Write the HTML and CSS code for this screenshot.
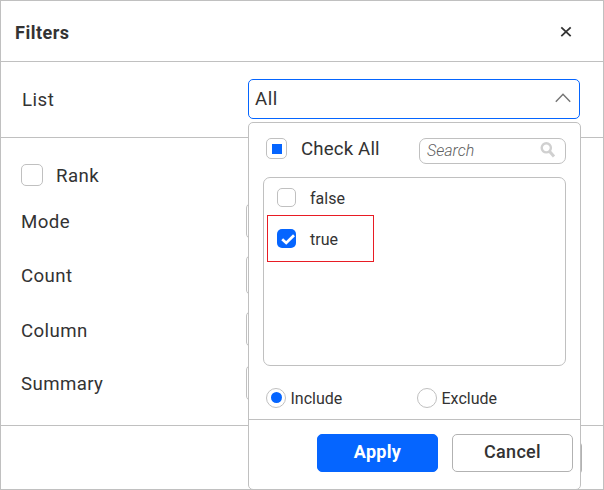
FILE: index.html
```html
<!DOCTYPE html>
<html lang="en">
<head>
<meta charset="utf-8">
<title>Filters</title>
<link rel="stylesheet" href="styles.css">
</head>
<body>
<div class="dialog">
  <header class="header">
    <span class="title">Filters</span>
    <svg class="close" width="12" height="12" viewBox="0 0 12 12"><path d="M1.3 1.3 10.7 10.2M10.7 1.3 1.3 10.2"/></svg>
  </header>
  <section class="list-row">
    <span class="label">List</span>
    <div class="select">
      <span class="select-value">All</span>
      <svg class="chevron" width="16" height="10" viewBox="0 0 16 10"><path d="M.8 8.8 8 1.2 15.2 8.8"/></svg>
      <div class="popup">
        <div class="popup-top">
          <span class="box partial"></span>
          <span class="check-all">Check All</span>
          <div class="search"><span class="search-text">Search</span>
            <svg width="16" height="16" viewBox="0 0 16 16"><circle cx="6.3" cy="5.8" r="4.6"/><path d="M9.2 9.1 14 14.4"/></svg>
          </div>
        </div>
        <div class="options">
          <div class="option"><span class="box small"></span><span class="option-text">false</span></div>
          <div class="option marked"><span class="box small checked"><svg width="19" height="19" viewBox="0 0 19 19"><path d="M5.2 10.3 9.2 14 17 6.2"/></svg></span><span class="option-text">true</span></div>
        </div>
        <div class="modes">
          <div class="mode"><span class="radio on"></span><span class="mode-text">Include</span></div>
          <div class="mode"><span class="radio"></span><span class="mode-text">Exclude</span></div>
        </div>
        <div class="actions"><div class="button primary"><span class="apply-text">Apply</span></div><div class="button"><span class="cancel-text">Cancel</span></div></div>
      </div>
    </div>
  </section>
  <section class="rank">
    <div class="rank-row"><span class="box large"></span><span class="rank-text">Rank</span></div>
    <div class="field"><span class="field-text">Mode</span><span class="input"></span></div>
    <div class="field count"><span class="field-text">Count</span><span class="input tall"></span></div>
    <div class="field column"><span class="field-text">Column</span><span class="input"></span></div>
    <div class="field summary"><span class="field-text">Summary</span><span class="input"></span></div>
  </section>
  <footer class="footer"><span class="footer-button"></span></footer>
</div>
</body>
</html>
```
FILE: styles.css
```css
* { box-sizing: border-box; }
body { margin: 0; background: #fff; color: #333; font: 18.67px/24px Roboto, sans-serif; }
svg { display: block; fill: none; }
.dialog { width: 604px; height: 490px; border: 1px solid #c0c0c0; overflow: hidden; display: flex; flex-direction: column; }
.header { height: 61px; border-bottom: 1px solid #c0c0c0; display: flex; align-items: center; justify-content: space-between; padding: 2px 31px 0 14px; }
.title { font-size: 18px; font-weight: 700; letter-spacing: .5px; padding-top: 1px; }
.close { stroke: #333; stroke-width: 1.8; }
.list-row { height: 76px; border-bottom: 1px solid #c0c0c0; display: flex; align-items: center; padding: 0 23px 0 21px; letter-spacing: .5px; }
.label { flex: 1; }
.select { position: relative; width: 332px; height: 40px; margin-top: -2px; border: 1px solid #0565ff; border-radius: 5px; display: flex; align-items: center; justify-content: space-between; padding: 0 8px 0 6px; background: #fff; }
.chevron { stroke: #757575; stroke-width: 1.4; margin-top: -1px; }
.popup { position: absolute; z-index: 2; top: 42px; left: -1px; width: 333px; height: 368px; border: 1px solid #c0c0c0; border-radius: 5px; background: #fff; letter-spacing: 0; }
.popup-top { height: 54px; display: flex; padding: 15px 14px 0 17px; }
.box { display: block; flex: none; width: 21px; height: 21px; border: 1px solid #c0c0c0; border-radius: 5px; background: #fff; }
.partial { padding: 5px; }
.partial::before { content: ""; display: block; width: 10px; height: 10px; background: #0565ff; margin-left: 0; }
.check-all { margin: -1px auto 0 14px; letter-spacing: .15px; }
.search { width: 147px; height: 26px; border: 1px solid #c0c0c0; border-radius: 7px; display: flex; justify-content: space-between; align-items: center; padding: 0 9px 0 7px; font-size: 16px; font-weight: 300; font-style: italic; color: #606060; }
.search svg { stroke: #d0d0d0; stroke-width: 2.4; margin-top: -2px; }
.search path { stroke-width: 3; }
.options { width: 303px; height: 189px; margin-left: 14px; border: 1px solid #c0c0c0; border-radius: 7px; padding: 1px 3px; font-size: 16px; }
.option { height: 36px; display: flex; align-items: center; padding-left: 10px; }
.option-text { padding-top: 3px; }
.option:first-child .option-text { padding-top: 5px; }
.marked { width: 107px; height: 47px; border: 1px solid #e81c24; padding-left: 9px; }
.small { width: 19px; height: 19px; margin-right: 14px; }
.option:first-child .small { margin-top: 2px; }
.checked { border: 0; background: #0565ff; stroke: #fff; stroke-width: 2.7; }
.modes { display: flex; height: 53px; padding: 22px 0 0 17px; font-size: 16px; }
.mode { display: flex; width: 151px; height: 20px; align-items: center; gap: 4.5px; }
.mode-text { padding-top: 2px; }
.radio { width: 20px; height: 20px; border: 1px solid #c0c0c0; border-radius: 50%; padding: 3px 4px; }
.on::before { content: ""; display: block; width: 11px; height: 11px; border-radius: 50%; background: #0565ff; }
.actions { border-top: 1px solid #c0c0c0; display: flex; gap: 14px; padding: 14px 0 0 68px; font-size: 18px; font-weight: 500; letter-spacing: .3px; }
.button { width: 121px; height: 38px; border: 1px solid #b2b2b2; border-radius: 5px; display: flex; justify-content: center; align-items: center; padding-bottom: 2px; }
.primary { background: #0565ff; border-color: #0565ff; color: #fff; font-weight: 700; }
.rank { height: 288px; border-bottom: 1px solid #c0c0c0; padding-left: 20px; letter-spacing: .4px; }
.rank-row { display: flex; align-items: center; gap: 13px; padding-top: 25px; height: 49px; }
.rank-text { padding-top: 2px; }
.large { width: 22px; height: 22px; }
.field { display: flex; height: 36px; margin-top: 16px; align-items: center; }
.field-text { width: 225px; padding-top: 2px; }
.input { width: 330px; height: 36px; border: 1px solid #c0c0c0; border-radius: 5px; }
.tall { height: 40px; }
.count { height: 40px; }
.column .field-text { padding-top: 4px; }
.summary { margin-top: 18px; }
.footer { height: 63px; padding: 15px 21px 0; display: flex; justify-content: flex-end; }
.footer-button { width: 121px; height: 34px; border: 1px solid #b2b2b2; border-radius: 5px; }
```
